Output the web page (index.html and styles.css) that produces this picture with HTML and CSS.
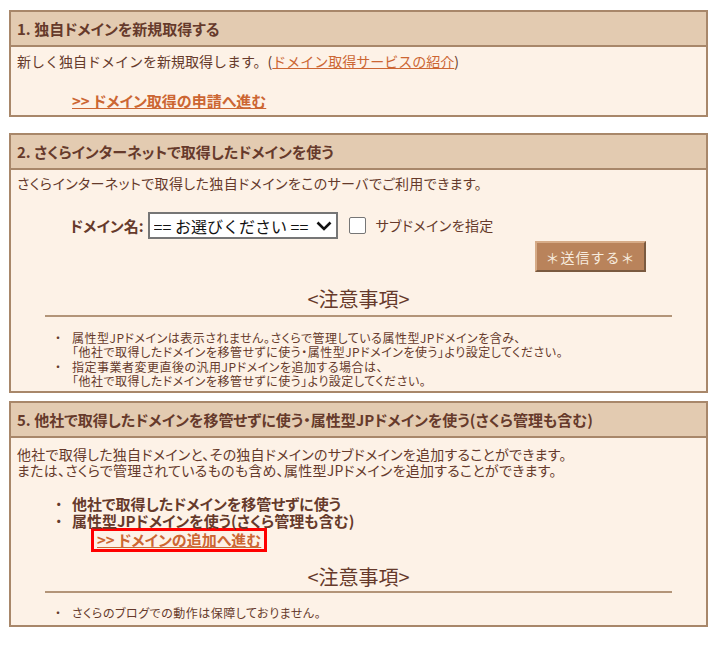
FILE: index.html
```html
<!DOCTYPE html>
<html lang="ja">
  <head>
    <meta charset="utf-8" />
    <meta name="viewport" content="width=device-width, initial-scale=1" />
    <link rel="stylesheet" href="styles.css">
    <title>ドメインの追加</title>
  </head>
  <body>
    <main class="page">
      <section class="panel">
        <h2 class="panel-head">1. 独自ドメインを新規取得する</h2>
        <div class="panel-body first-body">
          <p class="lead">新しく独自ドメインを新規取得します。(<a class="text-link" href="#">ドメイン取得サービスの紹介</a>)</p>
          <p class="go-row"><a class="go-link" href="#">&gt;&gt; ドメイン取得の申請へ進む</a></p>
        </div>
      </section>

      <section class="panel panel-own">
        <h2 class="panel-head">2. さくらインターネットで取得したドメインを使う</h2>
        <div class="panel-body">
          <p class="lead">さくらインターネットで取得した独自ドメインをこのサーバでご利用できます。</p>
          <form class="domain-form">
            <div class="domain-row">
              <label class="domain-label" for="domain">ドメイン名:</label>
              <span class="select-wrap">
                <select class="domain-select" id="domain">
                  <option>== お選びください ==</option>
                </select>
                <svg class="select-arrow" width="16" height="10" viewBox="0 0 16 10">
                  <path d="M1.5 1.5 L8 8 L14.5 1.5" fill="none" stroke="#111" stroke-width="2.6" />
                </svg>
              </span>
              <input class="sub-check" type="checkbox" id="sub" />
              <label class="sub-label" for="sub">サブドメインを指定</label>
            </div>
            <button class="send-btn" type="button">＊送信する＊</button>
          </form>

          <div class="notes">
            <h3 class="notes-title">&lt;注意事項&gt;</h3>
            <ul class="notes-list">
              <li>属性型JPドメインは表示されません。さくらで管理している属性型JPドメインを含み、<br>「他社で取得したドメインを移管せずに使う・属性型JPドメインを使う」より設定してください。</li>
              <li>指定事業者変更直後の汎用JPドメインを追加する場合は、<br>「他社で取得したドメインを移管せずに使う」より設定してください。</li>
            </ul>
          </div>
        </div>
      </section>

      <section class="panel panel-other">
        <h2 class="panel-head">5. 他社で取得したドメインを移管せずに使う・属性型JPドメインを使う(さくら管理も含む)</h2>
        <div class="panel-body">
          <p class="lead">他社で取得した独自ドメインと、その独自ドメインのサブドメインを追加することができます。<br>または、さくらで管理されているものも含め、属性型JPドメインを追加することができます。</p>
          <ul class="use-list">
            <li>他社で取得したドメインを移管せずに使う</li>
            <li>属性型JPドメインを使う(さくら管理も含む)</li>
          </ul>
          <p class="add-row"><a class="go-link boxed" href="#">&gt;&gt; ドメインの追加へ進む</a></p>

          <div class="notes">
            <h3 class="notes-title">&lt;注意事項&gt;</h3>
            <ul class="notes-list">
              <li>さくらのブログでの動作は保障しておりません。</li>
            </ul>
          </div>
        </div>
      </section>
    </main>
  </body>
</html>
```

FILE: styles.css
```css
:root {
  --border: #a8876a;
  --head-bg: #e3cbb1;
  --panel-bg: #fdf2e7;
  --text: #663a2b;
  --link: #cc6633;
}

* {
  box-sizing: border-box;
}

body {
  margin: 0;
  background: #fff;
  color: var(--text);
  font-family: "Noto Sans CJK JP", sans-serif;
  font-size: 14px;
  /* proportional kana, closer to the old gothic look */
  font-feature-settings: "palt";
}

p,
h2,
h3,
ul {
  margin: 0;
}

.page {
  width: 717px;
  padding: 10px 9px;
  display: flex;
  flex-direction: column;
}

.panel {
  width: 699px;
  border: 2px solid var(--border);
  background: var(--panel-bg);
}

.panel-own {
  margin-top: 16px;
}

.panel-other {
  margin-top: 8px;
}

.panel-head {
  background: var(--head-bg);
  border-bottom: 2px solid var(--border);
  font-size: 15px;
  font-weight: bold;
  line-height: 33px;
  padding-left: 6px;
}

.panel-body {
  padding: 5px 6px 3px;
}

.lead {
  line-height: 17px;
  letter-spacing: 0.4px;
}

.text-link {
  color: var(--link);
}

.go-link {
  color: var(--link);
  font-weight: bold;
  font-size: 15px;
}

.first-body {
  padding-bottom: 5px;
}

.first-body .lead {
  margin-top: 1px;
  font-feature-settings: normal;
  letter-spacing: 0;
}

.go-row {
  margin: 22px 0 0 55px;
  line-height: 18px;
}

/* select row and send button */
.domain-row {
  display: flex;
  align-items: center;
  margin: 19px 0 0 53px;
  height: 28px;
}

.domain-label {
  font-weight: bold;
  font-size: 15px;
  margin-right: 4px;
}

.select-wrap {
  position: relative;
  display: inline-block;
}

.domain-select {
  appearance: none;
  width: 190px;
  height: 27px;
  border: 2px solid #767676;
  background: #fff;
  color: #111;
  font-family: "Noto Sans CJK JP", sans-serif;
  font-size: 16px;
  padding: 0 0 0 4px;
  border-radius: 0;
}

.select-arrow {
  position: absolute;
  right: 6px;
  top: 9px;
  pointer-events: none;
}

.sub-check {
  appearance: none;
  width: 17px;
  height: 17px;
  margin: 0 10px 0 11px;
  border: 1px solid #767676;
  border-radius: 2px;
  background: #fff;
}

.sub-label {
  font-size: 14px;
  letter-spacing: 0.4px;
}

.send-btn {
  display: block;
  margin: 2px 0 0 518px;
  width: 111px;
  height: 31px;
  background: #b9835b;
  color: #f7ebde;
  border: 2px solid;
  border-color: #d6ab87 #7a5a40 #7a5a40 #d6ab87;
  font-family: "Noto Sans CJK JP", sans-serif;
  font-size: 14px;
  letter-spacing: 1px;
  padding: 0;
}

/* notes block */
.notes {
  margin: 0 28px;
}

.notes-title {
  margin-top: 14px;
  text-align: center;
  font-size: 20px;
  font-weight: normal;
  line-height: 26px;
  padding-bottom: 3px;
  border-bottom: 2px solid #b39579;
}

.notes-list {
  list-style: none;
  padding: 0 0 0 27px;
  margin-top: 14px;
  font-size: 12px;
  line-height: 14.3px;
  letter-spacing: 0.5px;
}

.notes-list li {
  position: relative;
}

.notes-list li::before {
  content: "・";
  position: absolute;
  left: -17px;
}

/* section 5 */
.panel-other .panel-body {
  padding-bottom: 5px;
}

.panel-other .lead {
  margin-top: 3px;
  line-height: 16px;
  letter-spacing: 0.25px;
}

.use-list {
  list-style: none;
  margin-top: 17px;
  padding-left: 55px;
  font-weight: bold;
  font-size: 15px;
  line-height: 17px;
}

.use-list li {
  position: relative;
}

.use-list li::before {
  content: "・";
  position: absolute;
  left: -17px;
  font-weight: normal;
}

.add-row {
  margin: 2px 0 0 77px;
  line-height: 18px;
}

.boxed {
  display: inline-block;
  outline: 3px solid #ff0000;
  outline-offset: 0;
  padding: 0 3px;
}

.panel-other .notes-title {
  margin-top: 15px;
  padding-bottom: 1px;
}

.panel-other .notes-list {
  margin-top: 13px;
}
```
